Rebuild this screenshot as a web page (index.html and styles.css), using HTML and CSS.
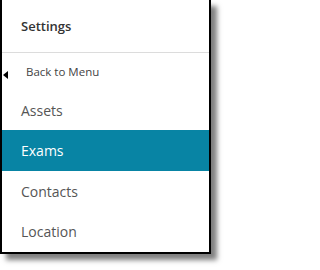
FILE: index.html
```html
<!DOCTYPE html>
<html>
<head>
<meta charset="utf-8">
<link rel="stylesheet" href="styles.css">
</head>
<body>
<div class="panel">
  <div class="header">Settings</div>
  <div class="back">
    <span class="arrow"></span>
    <span class="back-label">Back to Menu</span>
  </div>
  <div class="item">Assets</div>
  <div class="item active">Exams</div>
  <div class="item">Contacts</div>
  <div class="item">Location</div>
</div>
</body>
</html>
```
FILE: styles.css
```css
html, body {
  margin: 0;
  padding: 0;
  background: #fff;
}
body {
  font-family: "Open Sans", "Liberation Sans", sans-serif;
  width: 226px;
  height: 270px;
  overflow: hidden;
}
.panel {
  box-sizing: border-box;
  width: 211px;
  height: 254px;
  border-left: 2px solid #000;
  border-right: 2px solid #000;
  border-bottom: 2px solid #000;
  background: #fff;
  box-shadow: 6px 6px 5px rgba(0, 0, 0, 0.5);
  display: flex;
  flex-direction: column;
}
.header {
  height: 52px;
  border-bottom: 1px solid #dcdcdc;
  display: flex;
  align-items: center;
  padding-left: 19px;
  font-size: 13px;
  font-weight: 600;
  color: #333;
}
.back {
  height: 37px;
  display: flex;
  align-items: center;
  position: relative;
}
.arrow {
  position: absolute;
  left: 1px;
  top: 18px;
  width: 0;
  height: 0;
  border-top: 4px solid transparent;
  border-bottom: 4px solid transparent;
  border-right: 5px solid #000;
}
.back-label {
  padding-left: 24px;
  font-size: 11.5px;
  color: #444;
}
.item {
  height: 40px;
  display: flex;
  align-items: center;
  padding-left: 19px;
  font-size: 14px;
  color: #555;
}
.item.active {
  height: 41px;
  background: #0884a4;
  color: #fff;
}
```
